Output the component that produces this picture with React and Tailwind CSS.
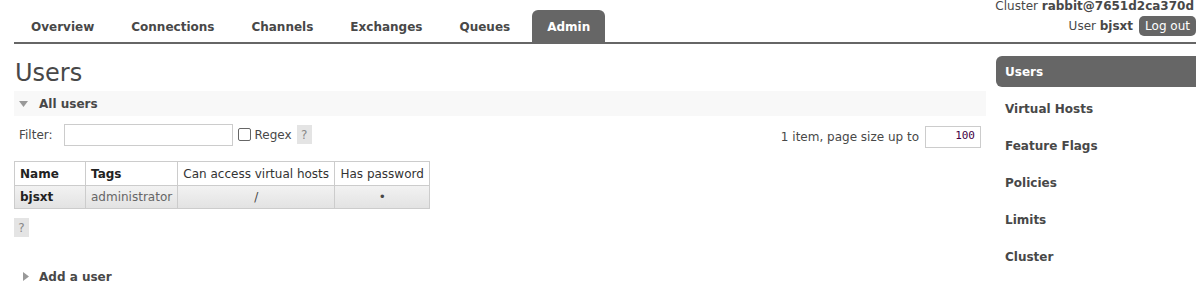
import React from 'react';

const tabs = ['Overview', 'Connections', 'Channels', 'Exchanges', 'Queues', 'Admin'];
const sideItems = ['Users', 'Virtual Hosts', 'Feature Flags', 'Policies', 'Limits', 'Cluster'];

const HelpBox = ({ className = '' }) => (
  <span className={`inline-flex items-center justify-center bg-[#e4e4e4] text-[#888] text-[12px] w-[15px] h-[19px] ${className}`}>?</span>
);

const App = () => {
  return (
    <div className="w-[1203px] h-[294px] overflow-hidden bg-white text-[12px] text-[#484848] font-['DejaVu_Sans',Verdana,sans-serif]">
      {/* Header */}
      <div className="flex justify-between items-end mx-[14px] mr-[7px] border-b-2 border-[#666] h-[44px]">
        <ul className="flex items-end pl-[2px] gap-[7px]">
          {tabs.map((t) => (
            <li
              key={t}
              className={`h-[32px] px-[15px] pt-[2px] flex items-center font-bold text-[12px] rounded-t-[6px] ${
                t === 'Admin' ? 'bg-[#666] text-white' : 'text-[#484848]'
              }`}
            >
              {t}
            </li>
          ))}
        </ul>
        <div className="flex flex-col items-end self-start">
          <div className="leading-[13px] pr-[2px]">
            Cluster <b>rabbit@7651d2ca370d</b>
          </div>
          <div className="flex items-center mt-[3px] gap-[6px]">
            <span>
              User <b>bjsxt</b>
            </span>
            <span className="bg-[#666] text-white rounded-[5px] px-[6px] h-[20px] flex items-center">Log out</span>
          </div>
        </div>
      </div>

      <div className="flex pl-[14px] pr-[7px]">
        {/* Main */}
        <div className="w-[972px]">
          <h1 className="text-[24px] leading-[30px] mt-[14px] pl-[1px] text-[#484848]">Users</h1>
          <div className="h-[25px] mt-[3px] bg-[#f8f8f8] flex items-center pl-[5px] font-bold text-[12px] text-[#484848]">
            <svg width="9" height="6" viewBox="0 0 9 6" className="mr-[11px]">
              <polygon points="0,0 9,0 4.5,6" fill="#999" />
            </svg>
            All users
          </div>

          <div className="flex items-center justify-between mt-[8px] h-[21px]">
            <div className="flex items-center pl-[5px]">
              <span className="mr-[11px]">Filter:</span>
              <span className="w-[169px] h-[22px] border border-[#ccc] bg-white"></span>
              <span className="w-[13px] h-[13px] border border-[#666] rounded-[2px] ml-[5px] mr-[4px]"></span>
              <span>Regex</span>
              <HelpBox className="ml-[5px]" />
            </div>
            <div className="flex items-center pr-[5px] mt-[4px]">
              <span className="mr-[6px]">1 item, page size up to</span>
              <span className="w-[56px] h-[22px] border border-[#ccc] flex items-center justify-end pr-[5px] text-[#404] font-['DejaVu_Sans_Mono',monospace] text-[11px]">
                100
              </span>
            </div>
          </div>

          <table className="mt-[16px] border-collapse text-[12px]">
            <thead>
              <tr className="h-[24px]">
                <th className="border border-[#ccc] w-[71px] text-left px-[5px] font-bold text-[#222]">Name</th>
                <th className="border border-[#ccc] w-[92px] text-left px-[5px] font-bold text-[#222]">Tags</th>
                <th className="border border-[#ccc] w-[157px] px-[5px] font-normal text-[#333]">Can access virtual hosts</th>
                <th className="border border-[#ccc] w-[95px] px-[5px] font-normal text-[#333]">Has password</th>
              </tr>
            </thead>
            <tbody>
              <tr className="h-[23px] bg-gradient-to-b from-[#f2f2f2] to-[#e2e2e2]">
                <td className="border border-[#ccc] px-[5px] font-bold text-[#222]">bjsxt</td>
                <td className="border border-[#ccc] px-[5px] text-[#666]">administrator</td>
                <td className="border border-[#ccc] px-[5px] text-center">/</td>
                <td className="border border-[#ccc] px-[5px] text-center text-[12px]">•</td>
              </tr>
            </tbody>
          </table>

          <HelpBox className="mt-[9px]" />

          <div className="mt-[27px] h-[25px] flex items-center pl-[9px] font-bold text-[12px] text-[#484848]">
            <svg width="6" height="9" viewBox="0 0 6 9" className="mr-[10px]">
              <polygon points="0,0 6,4.5 0,9" fill="#999" />
            </svg>
            Add a user
          </div>
        </div>

        {/* Sidebar */}
        <ul className="ml-[10px] w-[200px] mt-[12px]">
          {sideItems.map((s) => (
            <li
              key={s}
              className={`h-[31px] mb-[6px] flex items-center pl-[9px] font-bold text-[12px] rounded-l-[6px] ${
                s === 'Users' ? 'bg-[#666] text-white' : 'text-[#484848]'
              }`}
            >
              {s}
            </li>
          ))}
        </ul>
      </div>
    </div>
  );
};

export default App;
